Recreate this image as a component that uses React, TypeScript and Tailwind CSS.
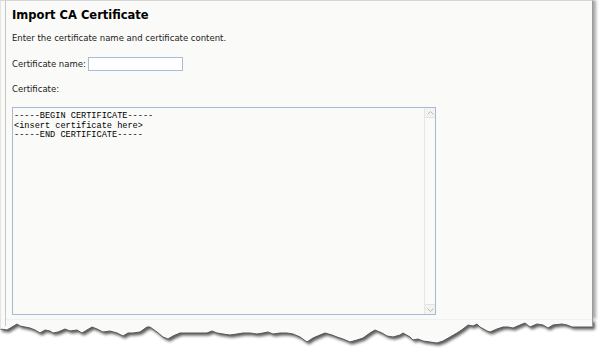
import React from "react";

const jag: [number, number][] = [
  [0, 329], [7, 330], [12, 327], [17, 324], [20, 326], [25, 327], [30, 328], [35, 330], [40, 333], [45, 330],
  [50, 331], [53, 333], [58, 332], [65, 329], [70, 331], [77, 330], [82, 333], [87, 330], [92, 327], [97, 329],
  [103, 332], [110, 331], [117, 333], [123, 336], [128, 333], [133, 333], [140, 332], [147, 327], [150, 327],
  [157, 332], [163, 337], [168, 339], [173, 336], [180, 333], [187, 333], [193, 333], [200, 333], [207, 333],
  [212, 331], [217, 333], [223, 334], [230, 335], [237, 334], [243, 333], [250, 333], [257, 334], [263, 333],
  [268, 332], [273, 334], [280, 333], [287, 333], [293, 334], [300, 337], [307, 342], [313, 338], [320, 335],
  [325, 333], [332, 335], [337, 337], [343, 339], [350, 342], [357, 340], [363, 338], [370, 333], [375, 330],
  [382, 333], [387, 336], [393, 337], [400, 335], [403, 333], [410, 337], [413, 340], [418, 339], [423, 341],
  [430, 342], [437, 343], [443, 341], [450, 337], [457, 333], [463, 329], [468, 325], [473, 326], [477, 324],
  [480, 327], [487, 331], [490, 332], [497, 329], [503, 327], [508, 327], [513, 328], [520, 325], [525, 323],
  [530, 327], [537, 324], [543, 325], [548, 328], [553, 325], [562, 324], [567, 325], [572, 327], [580, 327],
  [593, 327],
];

const TOP = 319;
const pts = jag.map(([x, y]) => [x, y - TOP] as [number, number]);
const edge = pts.map(([x, y], i) => `${i === 0 ? "M" : "L"}${x},${y}`).join(" ");
const shape =
  "M0,0 L593,0 " +
  [...pts].reverse().map(([x, y]) => `L${x},${y}`).join(" ") +
  " Z";

function TornEdge() {
  return (
    <svg width="600" height="34" viewBox="0 0 600 34" className="block">
      <defs>
        <filter id="blur" x="-10%" y="-50%" width="120%" height="200%">
          <feGaussianBlur stdDeviation="1.5" />
        </filter>
      </defs>
      <path d={shape} fill="#000" opacity="0.65" transform="translate(2,2.5)" filter="url(#blur)" />
      <path d={shape} fill="#fafaf8" />
      <path d={edge} fill="none" stroke="#5a5a5a" strokeWidth="1" />
      <line x1="592.5" y1="0" x2="592.5" y2="8" stroke="#9a9a9a" />
      <line x1="0.5" y1="0" x2="0.5" y2="10" stroke="#e4e4e4" />
      <line x1="5.5" y1="0" x2="5.5" y2="7" stroke="#c8c8c8" />
      <line x1="6" y1="0.5" x2="592" y2="0.5" stroke="#f0f0ee" />
    </svg>
  );
}

function Chevron({ up }: { up?: boolean }) {
  return (
    <svg width="7" height="4" viewBox="0 0 7 4">
      <polyline
        points={up ? "0.5,3.5 3.5,0.5 6.5,3.5" : "0.5,0.5 3.5,3.5 6.5,0.5"}
        fill="none"
        stroke="#b8b8b8"
        strokeWidth="1"
      />
    </svg>
  );
}

export default function App() {
  return (
    <div className="w-[600px] h-[353px] bg-white overflow-hidden flex flex-col">
      <div
        className="w-[593px] h-[319px] shrink-0 bg-[#fafaf8] border-t border-t-[#d6d6d6] border-r border-r-[#9a9a9a] shadow-[inset_1px_0_0_#e4e4e4,inset_5px_0_0_#fafaf8,inset_6px_0_0_#c8c8c8,3px_0_3px_rgba(0,0,0,0.35)] pl-[12px] pt-[7px] text-[#1a1a1a]"
        style={{ fontFamily: '"DejaVu Sans", Verdana, sans-serif' }}
      >
        <div className="text-[11.5px] leading-[14px] font-bold text-black">Import CA Certificate</div>
        <div className="mt-[11px] text-[8.5px] leading-[10px]">
          Enter the certificate name and certificate content.
        </div>
        <div className="mt-[14px] flex items-center gap-[2px] text-[8.5px] leading-[10px]">
          <span>Certificate name:</span>
          <div className="w-[95px] h-[14px] bg-white border border-[#a9bcd7]" />
        </div>
        <div className="mt-[13px] text-[8.5px] leading-[10px]">Certificate:</div>
        <div className="mt-[13px] w-[424px] h-[208px] border border-[#a8b9d2] bg-[#fafaf8] flex">
          <div
            className="flex-1 pl-[1px] pt-[4px] text-[8.6px] leading-[9.7px] text-black whitespace-pre"
            style={{ fontFamily: '"Liberation Mono", "Courier New", monospace' }}
          >
            {"-----BEGIN CERTIFICATE-----\n<insert certificate here>\n-----END CERTIFICATE-----"}
          </div>
          <div className="w-[11px] border-l border-[#e6e6e4] flex flex-col justify-between">
            <div className="h-[10px] border-b border-[#e2e2e0] bg-[#f3f3f1] flex items-center justify-center">
              <Chevron up />
            </div>
            <div className="h-[10px] border-t border-[#e2e2e0] bg-[#f3f3f1] flex items-center justify-center">
              <Chevron />
            </div>
          </div>
        </div>
      </div>
      <TornEdge />
    </div>
  );
}
